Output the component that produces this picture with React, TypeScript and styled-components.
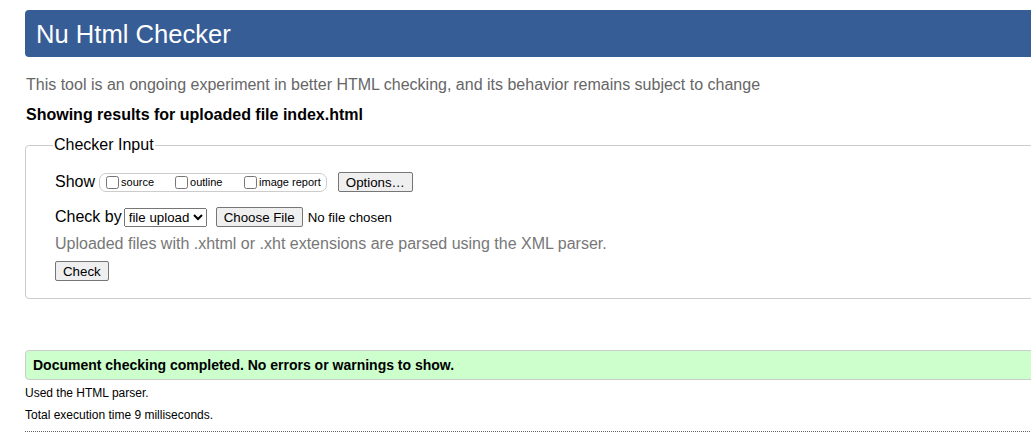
import React from "react";
import styled, { createGlobalStyle } from "styled-components";

const Global = createGlobalStyle`
  html, body { margin: 0; padding: 0; background: #fff; overflow: hidden; }
  body { font-family: "Liberation Sans", Arial, sans-serif; color: #000; }
`;

const Page = styled.div`
  width: 1200px;
  padding: 10px 0 0 25px;
  box-sizing: border-box;
`;

const Title = styled.h1`
  margin: 0;
  background: #365d95;
  color: #fff;
  font-weight: normal;
  font-size: 25.6px;
  line-height: 30px;
  padding: 9px 11px 8px;
  border-radius: 4px;
`;

const Intro = styled.p`
  margin: 19px 0 0 1px;
  color: #666;
  font-size: 16px;
  line-height: 18px;
`;

const Showing = styled.p`
  margin: 12px 0 0 1px;
  font-weight: bold;
  font-size: 16px;
  line-height: 18px;
`;

const Fieldset = styled.fieldset`
  margin: 12px 0 0;
  padding: 18px 29px 17px;
  border: 1px solid #ccc;
  border-radius: 4px;
  min-width: 0;
`;

const Legend = styled.legend`
  font-size: 16px;
  padding: 0 1px;
  margin-left: -2px;
`;

const Row = styled.div<{ $mt?: number }>`
  display: flex;
  align-items: center;
  font-size: 16px;
  height: 20px;
  margin-top: ${(p) => p.$mt ?? 0}px;
`;

const RowLabel = styled.span<{ $mr?: number }>`
  margin-right: ${(p) => p.$mr ?? 0}px;
`;

const Pill = styled.span`
  display: inline-flex;
  align-items: center;
  border: 1px solid #ccc;
  border-radius: 7px;
  height: 19px;
  box-sizing: border-box;
  padding: 0 5px 0 2px;
`;

const CheckLabel = styled.label<{ $w?: number }>`
  display: inline-flex;
  align-items: center;
  font-size: 11px;
  width: ${(p) => (p.$w ? `${p.$w}px` : "auto")};
  input { margin: 0 2px 0 4px; width: 13px; height: 13px; }
`;

const Btn = styled.button<{ $ml?: number }>`
  font-family: "Liberation Sans", Arial, sans-serif;
  font-size: 13.3px;
  background: #efefef;
  border: 1px solid #767676;
  border-radius: 2px;
  padding: 1px 7px;
  height: 20px;
  color: #000;
  margin-left: ${(p) => p.$ml ?? 0}px;
`;

const Select = styled.select`
  font-family: "Liberation Sans", Arial, sans-serif;
  font-size: 13.3px;
  height: 19px;
  margin-left: 2px;
`;

const NoFile = styled.span`
  font-size: 13.3px;
  margin-left: 5px;
`;

const Hint = styled.p`
  margin: 8px 0 0;
  color: #777;
  font-size: 16px;
  line-height: 18px;
`;

const Success = styled.p`
  margin: 51px 0 0;
  background: #ccffcc;
  border: 1px solid #ccc;
  border-radius: 4px;
  font-weight: bold;
  font-size: 14px;
  line-height: 16px;
  padding: 6px 7px;
`;

const Small = styled.p<{ $mt?: number }>`
  margin: ${(p) => p.$mt ?? 0}px 0 0;
  font-size: 12px;
  line-height: 14px;
  color: #000;
`;

const Rule = styled.hr`
  margin: 9px 0 0;
  border: 0;
  border-top: 1px dotted #666;
`;

export default function App() {
  return (
    <Page>
      <Global />
      <Title>Nu Html Checker</Title>
      <Intro>This tool is an ongoing experiment in better HTML checking, and its behavior remains subject to change</Intro>
      <Showing>Showing results for uploaded file index.html</Showing>
      <Fieldset>
        <Legend>Checker Input</Legend>
        <Row>
          <RowLabel $mr={4}>Show</RowLabel>
          <Pill>
            <CheckLabel $w={69}><input type="checkbox" />source</CheckLabel>
            <CheckLabel $w={69}><input type="checkbox" />outline</CheckLabel>
            <CheckLabel><input type="checkbox" />image report</CheckLabel>
          </Pill>
          <Btn $ml={11}>Options…</Btn>
        </Row>
        <Row $mt={15}>
          <RowLabel>Check by</RowLabel>
          <Select defaultValue="file upload">
            <option>file upload</option>
            <option>address</option>
            <option>text input</option>
          </Select>
          <Btn $ml={9}>Choose File</Btn>
          <NoFile>No file chosen</NoFile>
        </Row>
        <Hint>Uploaded files with .xhtml or .xht extensions are parsed using the XML parser.</Hint>
        <Row $mt={8}>
          <Btn>Check</Btn>
        </Row>
      </Fieldset>
      <Success>Document checking completed. No errors or warnings to show.</Success>
      <Small $mt={6}>Used the HTML parser.</Small>
      <Small $mt={8}>Total execution time 9 milliseconds.</Small>
      <Rule />
    </Page>
  );
}
